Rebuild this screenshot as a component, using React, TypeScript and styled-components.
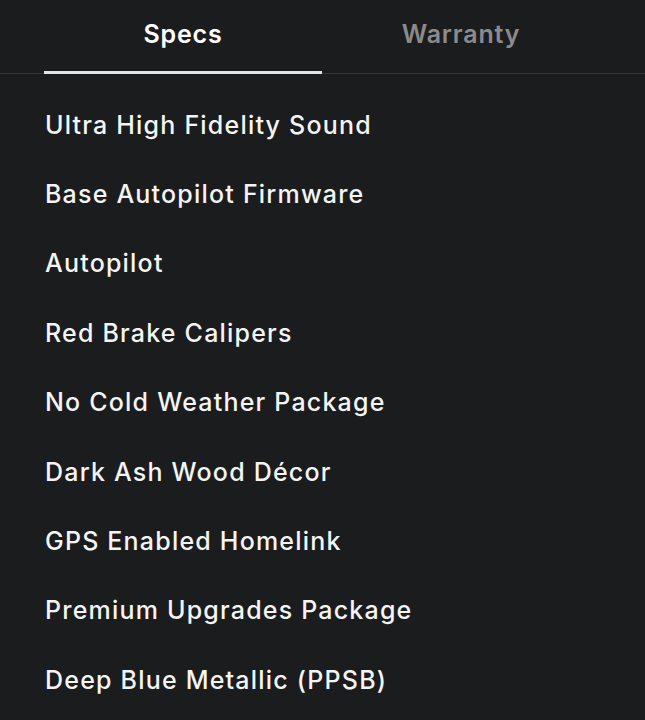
import React from "react";
import styled, { createGlobalStyle } from "styled-components";

const GlobalStyle = createGlobalStyle`
    html, body {
        margin: 0;
        padding: 0;
        background: #1b1c1e;
    }
    body {
        font-family: "Inter", "Noto Sans", sans-serif;
        -webkit-font-smoothing: antialiased;
    }
`;

const Page = styled.div`
    width: 645px;
    height: 720px;
    background: #1b1c1e;
    overflow: hidden;
`;

const TabBar = styled.div`
    display: flex;
    padding: 0 45px 0 44px;
    border-bottom: 1px solid #333436;
`;

const Tab = styled.button<{ active?: boolean }>`
    flex: 1;
    height: 74px;
    padding: 0 0 4px;
    margin-bottom: -1px;
    background: none;
    border: none;
    border-bottom: 3px solid ${(p) => (p.active ? "#e4e4e4" : "transparent")};
    color: ${(p) => (p.active ? "#ffffff" : "#8b8b8c")};
    font-family: inherit;
    font-size: 25px;
    font-weight: 600;
    letter-spacing: 0.8px;
    cursor: pointer;
`;

const List = styled.ul`
    list-style: none;
    margin: 0;
    padding: 16px 0 0 45px;
`;

const Item = styled.li`
    height: 69.4px;
    display: flex;
    align-items: center;
    color: #f4f4f4;
    font-size: 25px;
    font-weight: 500;
    letter-spacing: 1.2px;
`;

const specs = [
    "Ultra High Fidelity Sound",
    "Base Autopilot Firmware",
    "Autopilot",
    "Red Brake Calipers",
    "No Cold Weather Package",
    "Dark Ash Wood Décor",
    "GPS Enabled Homelink",
    "Premium Upgrades Package",
    "Deep Blue Metallic (PPSB)",
];

export default function App() {
    const [tab, setTab] = React.useState("specs");
    return (
        <Page>
            <GlobalStyle />
            <TabBar>
                <Tab active={tab === "specs"} onClick={() => setTab("specs")}>
                    Specs
                </Tab>
                <Tab active={tab === "warranty"} onClick={() => setTab("warranty")}>
                    Warranty
                </Tab>
            </TabBar>
            <List>
                {specs.map((spec) => (
                    <Item key={spec}>{spec}</Item>
                ))}
            </List>
        </Page>
    );
}
